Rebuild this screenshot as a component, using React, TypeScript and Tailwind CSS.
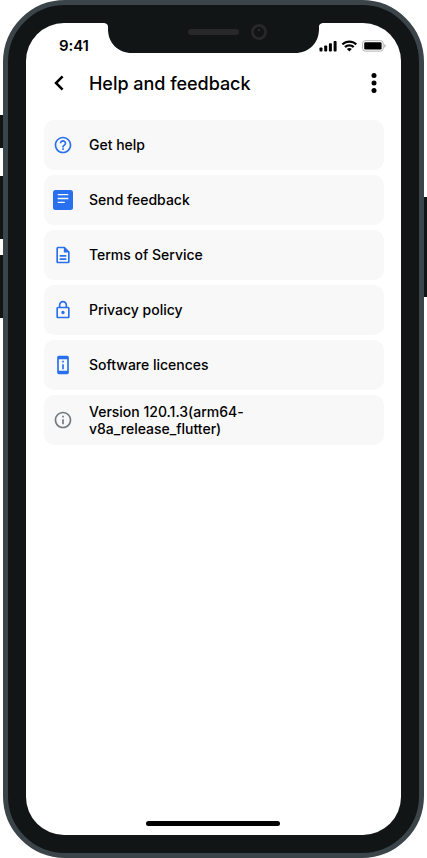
import type { ReactNode } from "react";

const BLUE = "#2970ee";

function Glyph({ children, color = BLUE }: { children: ReactNode; color?: string }) {
  return (
    <svg className="size-5 shrink-0" viewBox="0 0 24 24" fill={color}>
      {children}
    </svg>
  );
}

const items: { label: string; icon: ReactNode }[] = [
  {
    label: "Get help",
    icon: (
      <Glyph>
        <path d="M11 18h2v-2h-2v2zm1-16C6.480 2 2 6.480 2 12s4.480 10 10 10 10-4.480 10-10S17.520 2 12 2zm0 18c-4.410 0-8-3.590-8-8s3.590-8 8-8 8 3.590 8 8-3.590 8-8 8zm0-14c-2.210 0-4 1.790-4 4h2c0-1.100.900-2 2-2s2 .900 2 2c0 2-3 1.750-3 5h2c0-2.250 3-2.500 3-5 0-2.210-1.790-4-4-4z" />
      </Glyph>
    ),
  },
  {
    label: "Send feedback",
    icon: (
      <svg className="size-5 shrink-0" viewBox="0 0 20 20">
        <rect width="20" height="20" rx="2.5" fill={BLUE} />
        <path d="M4.700 4.700H15.300M4.700 8.500H15.300M4.700 12.400H11.800" stroke="#fff" strokeWidth="1.300" />
      </svg>
    ),
  },
  {
    label: "Terms of Service",
    icon: (
      <Glyph>
        <path d="M8 16h8v2H8zm0-4h8v2H8zm6-10H6c-1.100 0-2 .900-2 2v16c0 1.100.890 2 1.990 2H18c1.100 0 2-.900 2-2V8l-6-6zm4 18H6V4h7v5h5v11z" />
      </Glyph>
    ),
  },
  {
    label: "Privacy policy",
    icon: (
      <Glyph>
        <path d="M18 8h-1V6c0-2.760-2.240-5-5-5S7 3.240 7 6v2H6c-1.100 0-2 .900-2 2v10c0 1.100.900 2 2 2h12c1.100 0 2-.900 2-2V10c0-1.100-.900-2-2-2zM9 6c0-1.660 1.340-3 3-3s3 1.340 3 3v2H9V6zm9 14H6V10h12v10zm-6-3c1.100 0 2-.900 2-2s-.900-2-2-2-2 .900-2 2 .900 2 2 2z" />
      </Glyph>
    ),
  },
  {
    label: "Software licences",
    icon: (
      <Glyph>
        <path d="M11 7h2v2h-2zm0 4h2v6h-2zm6-9.990L7 1c-1.100 0-2 .900-2 2v18c0 1.100.900 2 2 2h10c1.100 0 2-.900 2-2V3c0-1.100-.900-1.990-2-1.990zM17 19H7V5h10v14z" />
      </Glyph>
    ),
  },
  {
    label: "Version 120.1.3(arm64-v8a_release_flutter)",
    icon: (
      <Glyph color="#737980">
        <path d="M11 7h2v2h-2zm0 4h2v6h-2zm1-9C6.480 2 2 6.480 2 12s4.480 10 10 10 10-4.480 10-10S17.520 2 12 2zm0 18c-4.410 0-8-3.590-8-8s3.590-8 8-8 8 3.590 8 8-3.590 8-8 8z" />
      </Glyph>
    ),
  },
];

function Notch() {
  return (
    <svg className="absolute left-[77px] top-0 h-[31px] w-[221px]" viewBox="0 0 221 31">
      <path d="M0 0H221C218 0 216 1 216 4V6C216 20 206 30 192 30H29C15 30 5 20 5 6V4C5 1 3 0 0 0Z" fill="#121516" />
      <rect x="85" y="6" width="51" height="6" rx="3" fill="#262829" />
      <circle cx="156" cy="9" r="6.600" fill="#121516" stroke="#262829" strokeWidth="2.800" />
      <circle cx="156" cy="7" r="1" fill="#35383a" />
    </svg>
  );
}

function StatusIcons() {
  return (
    <svg className="h-3 w-[67px]" viewBox="0 0 67 12">
      <rect x="0.500" y="7.500" width="3" height="4" rx="0.800" />
      <rect x="5.200" y="5.500" width="3" height="6" rx="0.800" />
      <rect x="9.900" y="3.200" width="3" height="8.300" rx="0.800" />
      <rect x="14.600" y="0.900" width="3" height="10.600" rx="0.800" />
      <g transform="translate(22.700 .4)">
        <path d="M7.630 2.270c2.220 0 4.350.850 5.960 2.370.120.120.310.110.430 0l1.160-1.170a.32.32 0 0 0 0-.450c-4.220-4.030-10.880-4.030-15.100 0a.32.32 0 0 0 0 .450l1.160 1.170c.120.120.310.120.430 0a8.660 8.660 0 0 1 5.960-2.370Zm0 3.800c1.220 0 2.400.450 3.290 1.270.120.120.320.120.440 0l1.160-1.180a.32.32 0 0 0 0-.460 7.120 7.120 0 0 0-9.780 0 .32.32 0 0 0 0 .46l1.160 1.180c.120.120.320.120.440 0a4.850 4.850 0 0 1 3.290-1.270Zm2.330 2.590a.32.32 0 0 1-.1.230L7.850 10.920a.31.31 0 0 1-.44 0L5.400 8.890a.32.32 0 0 1 .01-.46 3.430 3.430 0 0 1 4.440 0c.07.06.11.14.11.23Z" />
      </g>
      <rect x="43.600" y=".7" width="20.600" height="10.400" rx="2.600" fill="none" stroke="#aaa" strokeWidth=".9" />
      <rect x="45.200" y="2.300" width="17.400" height="7.200" rx="1.300" />
      <path d="M65.400 4v3.800c1.500-.6 1.500-3.200 0-3.800Z" fill="#999" />
    </svg>
  );
}

export default function App() {
  return (
    <div className="relative h-[858px] w-[427px] overflow-hidden bg-white font-['Inter',sans-serif] text-black">
      <div className="absolute -left-1 top-[115px] h-[33px] w-4 rounded-[2px] bg-[#121516]" />
      <div className="absolute -left-1 top-[176px] h-[63px] w-4 rounded-[2px] bg-[#121516]" />
      <div className="absolute -left-1 top-[255px] h-[63px] w-4 rounded-[2px] bg-[#121516]" />
      <div className="absolute -right-1 top-[197px] h-[100px] w-4 rounded-[2px] bg-[#121516]" />

      <div className="relative mx-[3px] h-full rounded-[62px] border-[5px] border-[#3b4448] bg-[#121516] px-[18px] pb-[18px] pt-[18px]">
        <div className="relative flex h-full flex-col overflow-hidden rounded-[38px] bg-white">
          <Notch />
          <div className="flex h-[45px] items-center justify-between pl-[33px] pr-[15px]">
            <span className="text-[15px] font-semibold leading-5 tracking-[-0.1px]">9:41</span>
            <StatusIcons />
          </div>
          <header className="flex h-8 items-center pl-[26px] pr-[22px]">
            <svg className="mb-0.5 h-[16px] w-[12px]" viewBox="0 0 12 16" fill="none" stroke="#000" strokeWidth="2.500">
              <path d="M10.600 1.300 4 8l6.600 6.700" />
            </svg>
            <h1 className="ml-[25px] flex-1 text-[18px] font-medium leading-6 tracking-[-0.03px]">Help and feedback</h1>
            <svg className="mb-0.5 h-5 w-[10px]" viewBox="0 0 10 20">
              <circle cx="5" cy="2.500" r="2.500" />
              <circle cx="5" cy="10" r="2.500" />
              <circle cx="5" cy="17.500" r="2.500" />
            </svg>
          </header>
          <ul className="mt-5 flex flex-col gap-[5px] pl-[18px] pr-[17px]">
            {items.map((item) => (
              <li key={item.label} className="flex h-[50px] items-center gap-4 rounded-[10px] bg-[#f8f8f8] pl-[9px]">
                {item.icon}
                <span className="mb-px w-[200px] text-[14px] font-medium leading-[17px]">{item.label}</span>
              </li>
            ))}
          </ul>
          <div className="mb-[9px] ml-[120px] mt-auto h-[5px] w-[134px] rounded-full bg-black" />
        </div>
      </div>
    </div>
  );
}
